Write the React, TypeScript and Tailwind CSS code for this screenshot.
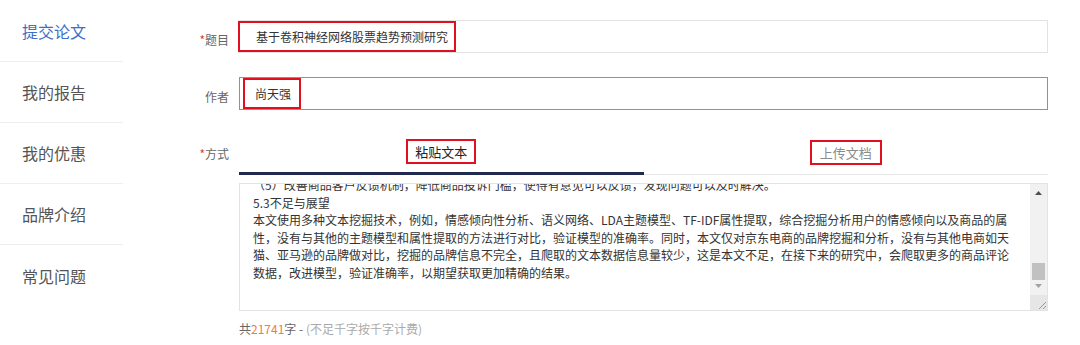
const menu = ["提交论文", "我的报告", "我的优惠", "品牌介绍", "常见问题"];

const lines = [
  "（5）改善商品客户反馈机制，降低商品投诉门槛，使得有意见可以反馈，发现问题可以及时解决。",
  "5.3不足与展望",
  "本文使用多种文本挖掘技术，例如，情感倾向性分析、语义网络、LDA主题模型、TF-IDF属性提取，综合挖掘分析用户的情感倾向以及商品的属",
  "性，没有与其他的主题模型和属性提取的方法进行对比，验证模型的准确率。同时，本文仅对京东电商的品牌挖掘和分析，没有与其他电商如天",
  "猫、亚马逊的品牌做对比，挖掘的品牌信息不完全，且爬取的文本数据信息量较少，这是本文不足，在接下来的研究中，会爬取更多的商品评论",
  "数据，改进模型，验证准确率，以期望获取更加精确的结果。",
];

function Label({ text, required }: { text: string; required?: boolean }) {
  return (
    <div className="w-[106px] shrink-0 text-right text-[12px] text-[#666] mt-[6px]">
      {required ? <span className="text-[#e4393c]">*</span> : null}
      {text}
    </div>
  );
}

export default function App() {
  return (
    <div
      className="flex h-[345px] w-[1080px] bg-white text-[#333]"
      style={{ fontFamily: '"Microsoft YaHei", "Noto Sans CJK SC", "Noto Sans", sans-serif' }}
    >
      <aside className="w-[123px] shrink-0 pt-[1px]">
        {menu.map((m, i) => (
          <div
            key={m}
            className={
              "flex h-[61px] items-center pl-[22px] text-[16px] " +
              (i === 0 ? "text-[#3d6fc6] " : "text-[#555] ") +
              (i < 4 ? "border-b border-[#eeeeee]" : "")
            }
          >
            {m}
          </div>
        ))}
      </aside>

      <main className="flex flex-1 flex-col pr-[32px] pt-[20px]">
        <div className="flex items-center gap-[9px]">
          <Label text="题目" required />
          <div className="flex h-[33px] flex-1 items-center border border-[#e3e3e3]">
            <span className="-ml-px flex h-[31px] items-center border-2 border-[#e0101e] pl-[16px] pr-[6px] text-[12px] text-[#333]">
              基于卷积神经网络股票趋势预测研究
            </span>
          </div>
        </div>

        <div className="mt-[24px] flex items-center gap-[10px]">
          <Label text="作者" />
          <div className="flex h-[33px] flex-1 items-center border border-[#6b98d6] pl-[3px]">
            <span className="flex h-[31px] items-center border-2 border-[#e0101e] pl-[10px] pr-[8px] text-[12px] text-[#333]">
              尚天强
            </span>
          </div>
        </div>

        <div className="mt-[21px] flex gap-[10px]">
          <div className="w-[106px] shrink-0 pt-[14px] text-right text-[12px] text-[#666]">
            <span className="text-[#e4393c]">*</span>方式
          </div>
          <div className="flex flex-1 flex-col">
            <div className="flex h-[44px] border-b border-[#e8e8e8]">
              <div className="-mb-px flex flex-1 items-center justify-center border-b-[3px] border-[#1f2a4e]">
                <span className="border-2 border-[#e0101e] px-[7px] py-[1px] text-[13px] text-[#222]">粘贴文本</span>
              </div>
              <div className="flex flex-1 items-center justify-center">
                <span className="border-2 border-[#e0101e] px-[8px] py-[1px] text-[13px] text-[#8c8c8c]">上传文档</span>
              </div>
            </div>

            <div className="mt-[8px] flex h-[128px] border border-[#e3e3e3]">
              <div className="flex-1 overflow-hidden pl-[13px]">
                <div className="-mt-[8px] text-[12px] leading-[17.5px] text-[#333]">
                  {lines.map((l) => (
                    <div key={l} className="whitespace-nowrap">
                      {l}
                    </div>
                  ))}
                </div>
              </div>
              <div className="flex w-[17px] flex-col items-center bg-[#f1f1f1]">
                <svg width="9" height="16" viewBox="0 0 9 16" className="mt-[1px]">
                  <path d="M1 10 L4.5 6 L8 10 Z" fill="#505050" />
                </svg>
                <div className="mt-[62px] h-[17px] w-[13px] bg-[#c1c1c1]" />
                <svg width="9" height="12" viewBox="0 0 9 12">
                  <path d="M1 4 L4.5 8 L8 4 Z" fill="#a3a3a3" />
                </svg>
                <div className="mt-auto flex h-[15px] w-[17px] items-end justify-end bg-[#e6e6e6]">
                  <svg width="12" height="12" viewBox="0 0 12 12">
                    <path d="M11 4 L4 11 M11 8 L8 11" stroke="#999" strokeWidth="1" />
                  </svg>
                </div>
              </div>
            </div>

            <div className="mt-[9px] text-[12px] text-[#666]">
              共<span className="text-[#f47b3a]">21741</span>字 - <span className="text-[#aaa]">(不足千字按千字计费)</span>
            </div>
          </div>
        </div>
      </main>
    </div>
  );
}
